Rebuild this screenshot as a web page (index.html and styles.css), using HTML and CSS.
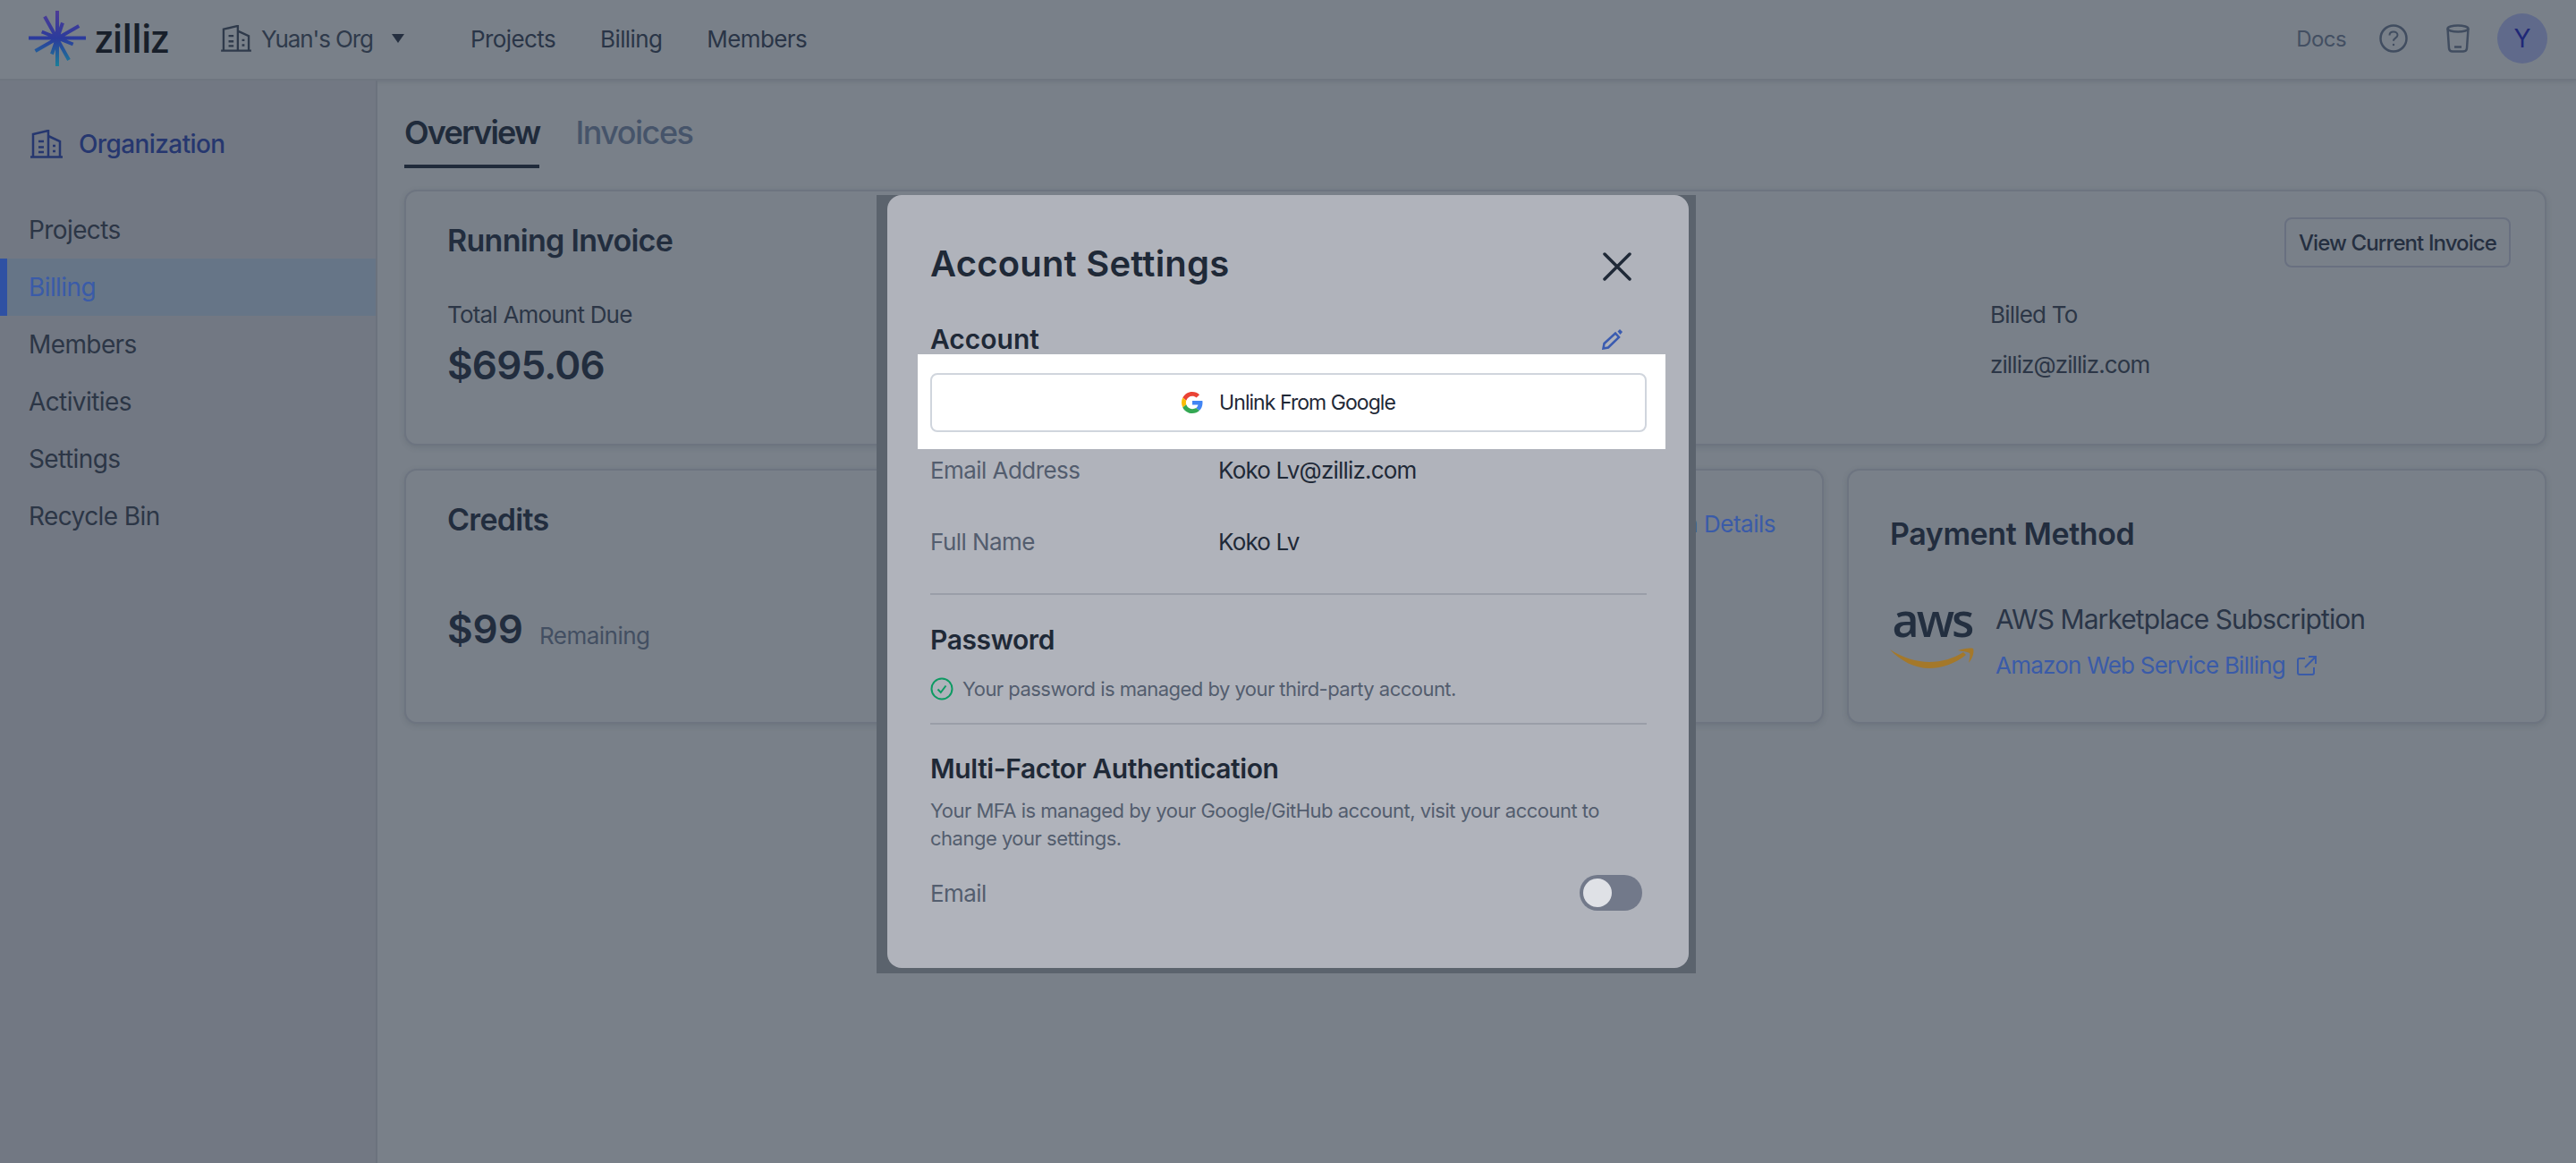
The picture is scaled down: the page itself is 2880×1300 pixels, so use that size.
FILE: index.html
```html
<!DOCTYPE html>
<html lang="en">
<head>
    <meta charset="UTF-8">
    <title>Zilliz - Billing</title>
    <link rel="stylesheet" href="styles.css">
</head>
<body>
    <header class="topbar">
        <div class="brand">
            <svg class="brand-mark" width="66" height="66" viewBox="31 11 66 66" fill="none">
                <defs>
                    <linearGradient id="star" gradientUnits="userSpaceOnUse" x1="64" y1="12" x2="64" y2="76">
                        <stop offset="0" stop-color="#4f3c96"/>
                        <stop offset="0.5" stop-color="#2b3b9c"/>
                        <stop offset="1" stop-color="#1a8098"/>
                    </linearGradient>
                </defs>
                <path stroke="url(#star)" stroke-width="4" d="M64 13V75M32 43.5H96M50 19.5 77 68M88.3 30 39.5 58M70 26.5 58 61.5M46.7 36.5 81.7 50.5"/>
            </svg>
            <span class="brand-name">zilliz</span>
        </div>
        <div class="org-switch">
            <svg width="34" height="30" viewBox="0 0 36 32" fill="none" stroke="#2f3a4b" stroke-width="2.5">
                <path d="M0 30.5H36M3 30V5L20 1V30M20 7L33 13V30M9 13H15M9 19.5H15M9 25H15M25 18H28M25 24H28"/>
            </svg>
            <span>Yuan's Org</span>
            <i class="caret"></i>
        </div>
        <nav class="topnav">
            <a href="#">Projects</a>
            <a href="#">Billing</a>
            <a href="#">Members</a>
        </nav>
        <div class="top-actions">
            <a href="#" class="docs">Docs</a>
            <svg class="help-icon" width="32" height="32" viewBox="0 0 32 32" fill="none" stroke="#414d60" stroke-width="2.5">
                <circle cx="16" cy="16" r="14.5"/>
                <path d="M11.5 12.5C11.5 9.8 13.5 8.5 16 8.5S20.5 10 20.5 12.3C20.5 15.3 16 15.5 16 18.8" stroke-width="2"/>
                <circle cx="16" cy="23" r="1.2" fill="#414d60" stroke="none"/>
            </svg>
            <svg class="bucket-icon" width="26" height="32" viewBox="0 0 26 32" fill="none" stroke="#414d60" stroke-width="2.5">
                <ellipse cx="13" cy="5" rx="11.5" ry="3.5"/>
                <path d="M1.5 5L3 27C3.2 29.5 5 30.5 7 30.5H19C21 30.5 22.8 29.5 23 27L24.5 5M9 25.5H17"/>
            </svg>
            <div class="avatar">Y</div>
        </div>
    </header>

    <div class="layout">
        <aside class="sidebar">
            <div class="side-title">
                <svg width="36" height="32" viewBox="0 0 36 32" fill="none" stroke="#26376f" stroke-width="2.5">
                    <path d="M0 30.5H36M3 30V5L20 1V30M20 7L33 13V30M9 13H15M9 19.5H15M9 25H15M25 18H28M25 24H28"/>
                </svg>
                <span>Organization</span>
            </div>
            <a href="#" class="side-link">Projects</a>
            <a href="#" class="side-link active">Billing</a>
            <a href="#" class="side-link">Members</a>
            <a href="#" class="side-link">Activities</a>
            <a href="#" class="side-link">Settings</a>
            <a href="#" class="side-link">Recycle Bin</a>
        </aside>

        <main class="content">
            <div class="tabs">
                <a href="#" class="tab active">Overview</a>
                <a href="#" class="tab">Invoices</a>
            </div>

            <section class="card invoice-card">
                <div class="card-head">
                    <h2>Running Invoice</h2>
                    <button class="outline-btn">View Current Invoice</button>
                </div>
                <div class="invoice-cols">
                    <div>
                        <p class="label">Total Amount Due</p>
                        <p class="amount">$695.06</p>
                    </div>
                    <div class="billed">
                        <p class="label">Billed To</p>
                        <p class="billed-mail">zilliz@zilliz.com</p>
                    </div>
                </div>
            </section>

            <div class="card-row">
                <section class="card credits-card">
                    <div class="credits-head">
                        <h2>Credits</h2>
                        <a href="#" class="link">Redemption Details</a>
                    </div>
                    <p class="credits-left"><span class="amount">$99</span><span class="label">Remaining</span></p>
                </section>
                <section class="card payment-card">
                    <h2>Payment Method</h2>
                    <div class="payment-body">
                        <div class="aws-logo">
                            <span>aws</span>
                            <svg width="94" height="24" viewBox="0 0 94 24">
                                <path fill="#a4782a" d="M0 2C14 11 30 16 44 16C58 16 71 12 82 5L85 8C74 17 58 23 44 23C28 23 12 15 0 2Z"/>
                                <path fill="#a4782a" d="M76 3C82 1 90 0 93 1C94.500 5 92 13 88 17C89 12 90 8 89 6C86 4.500 81 4 76 3Z"/>
                            </svg>
                        </div>
                        <div>
                            <p class="payment-name">AWS Marketplace Subscription</p>
                            <a href="#" class="link aws-link">Amazon Web Service Billing
                                <svg width="22" height="22" viewBox="0 0 22 22" fill="none" stroke="#3a5ba8" stroke-width="2">
                                    <path d="M9 3H3C2 3 1 4 1 5V19C1 20 2 21 3 21H17C18 21 19 20 19 19V13M13 1H21V9M21 1L9 13"/>
                                </svg>
                            </a>
                        </div>
                    </div>
                </section>
            </div>
        </main>
    </div>

    <div class="modal-frame">
        <div class="modal">
            <div class="modal-head">
                <h1>Account Settings</h1>
                <svg class="close" width="32" height="32" viewBox="0 0 32 32" fill="none" stroke="#1f2937" stroke-width="3.5" stroke-linecap="round">
                    <path d="M2 2L30 30M30 2L2 30"/>
                </svg>
            </div>
            <div class="section-head account-head">
                <h3>Account</h3>
                <svg class="pencil" width="24" height="24" viewBox="0 0 24 24" fill="none" stroke="#3a5bb0" stroke-width="2.5">
                    <path d="M1.5 22.5L2.5 17L15 5.5L19 10L7 21.5Z"/>
                    <path d="M17.5 3.5L20 1L23 4L20.5 7Z" fill="#3a5bb0" stroke="none"/>
                </svg>
            </div>
            <div class="spotlight">
                <button class="google-btn">
                    <svg width="24" height="24" viewBox="0 0 48 48">
                        <path fill="#EA4335" d="M24 9.5c3.54 0 6.71 1.22 9.21 3.6l6.85-6.85C35.9 2.38 30.47 0 24 0 14.62 0 6.51 5.38 2.56 13.22l7.98 6.19C12.43 13.72 17.74 9.5 24 9.5z"/>
                        <path fill="#4285F4" d="M46.98 24.55c0-1.57-.15-3.09-.38-4.55H24v9.02h12.94c-.58 2.96-2.26 5.48-4.78 7.18l7.73 6c4.51-4.18 7.09-10.36 7.09-17.65z"/>
                        <path fill="#FBBC05" d="M10.53 28.59c-.48-1.45-.76-2.99-.76-4.59s.27-3.14.76-4.59l-7.98-6.19C.92 16.46 0 20.12 0 24c0 3.88.92 7.54 2.56 10.78l7.97-6.19z"/>
                        <path fill="#34A853" d="M24 48c6.48 0 11.93-2.13 15.89-5.81l-7.73-6c-2.15 1.45-4.92 2.3-8.16 2.3-6.26 0-11.57-4.22-13.47-9.91l-7.98 6.19C6.51 42.62 14.62 48 24 48z"/>
                    </svg>
                    <span>Unlink From Google</span>
                </button>
            </div>
            <div class="field"><span class="field-name">Email Address</span><span>Koko Lv@zilliz.com</span></div>
            <div class="field field-second"><span class="field-name">Full Name</span><span>Koko Lv</span></div>
            <hr class="divider">
            <h3 class="password-title">Password</h3>
            <p class="note">
                <svg width="26" height="26" viewBox="0 0 26 26" fill="none" stroke="#0e9a63" stroke-width="2">
                    <circle cx="13" cy="13" r="11.5"/>
                    <path d="M8.5 13.5L11.8 17L17.5 9.5"/>
                </svg>
                Your password is managed by your third-party account.
            </p>
            <hr class="divider divider-tight">
            <h3 class="mfa-title">Multi-Factor Authentication</h3>
            <p class="mfa-text">Your MFA is managed by your Google/GitHub account, visit your account to change your settings.</p>
            <div class="mfa-row">
                <span class="field-name">Email</span>
                <span class="toggle"><i></i></span>
            </div>
        </div>
    </div>
</body>
</html>
```

FILE: styles.css
```css
* {
    box-sizing: border-box;
}
html, body {
    height: 100%;
}
body {
    margin: 0;
    position: relative;
    display: flex;
    flex-direction: column;
    font-family: Inter, "Noto Sans", sans-serif;
    background-color: #798089;
    color: #252f40;
    overflow: hidden;
}
h1, h2, h3, p {
    margin: 0;
}
a {
    color: inherit;
    text-decoration: none;
}

/* top bar */
.topbar {
    height: 90px;
    flex: none;
    display: flex;
    align-items: center;
    padding-bottom: 2px;
    border-bottom: 2px solid #6f7680;
    box-shadow: 0 2px 4px rgba(60, 68, 80, 0.15);
}
.brand {
    display: flex;
    align-items: center;
    margin-left: 31px;
    width: 216px;
}
.brand-mark {
    flex: none;
}
.brand-name {
    margin-left: 9px;
    font-family: "Open Sans", sans-serif;
    font-size: 43px;
    line-height: 60px;
    font-weight: 600;
    letter-spacing: -1.2px;
    color: #181f2a;
}
.org-switch {
    display: flex;
    align-items: center;
    width: 279px;
    font-size: 26px;
    letter-spacing: -1.1px;
    color: #2f3a4b;
}
.org-switch span {
    margin-left: 11px;
}
.caret {
    margin-left: 21px;
    border-left: 7px solid transparent;
    border-right: 7px solid transparent;
    border-top: 10px solid #252f40;
}
.topnav {
    display: flex;
    gap: 50px;
    font-size: 26px;
    letter-spacing: -0.6px;
    color: #2a3547;
}
.top-actions {
    margin-left: auto;
    margin-right: 32px;
    display: flex;
    align-items: center;
}
.docs {
    font-size: 24px;
    letter-spacing: -0.6px;
    color: #434f62;
}
.help-icon {
    margin-left: 37px;
}
.bucket-icon {
    margin-left: 43px;
}
.avatar {
    width: 56px;
    height: 56px;
    margin-left: 31px;
    border-radius: 50%;
    display: flex;
    align-items: center;
    justify-content: center;
    background-color: #606a8b;
    color: #1f2877;
    font-size: 28px;
}

/* sidebar */
.layout {
    flex: 1;
    display: flex;
}
.sidebar {
    width: 422px;
    flex: none;
    background-color: #727883;
    border-right: 2px solid #6b727d;
    font-size: 28px;
    letter-spacing: -0.6px;
    color: #2c3646;
}
.side-title {
    display: flex;
    align-items: center;
    gap: 18px;
    margin: 51px 0 44px 34px;
    height: 40px;
    color: #26376f;
    font-weight: 500;
}
.side-link {
    display: block;
    height: 64px;
    line-height: 64px;
    padding-left: 32px;
}
.side-link.active {
    padding-left: 24px;
    border-left: 8px solid #2f51a3;
    background-color: #667587;
    color: #3a5ba8;
}

/* content */
.content {
    flex: 1;
    padding: 0 33px 0 30px;
}
.tabs {
    display: flex;
    gap: 40px;
    height: 98px;
    padding-top: 36px;
}
.tab {
    height: 62px;
    line-height: 44px;
    font-size: 36px;
    font-weight: 500;
    letter-spacing: -1.5px;
    color: #46546a;
}
.tab.active {
    font-weight: 600;
    letter-spacing: -1.8px;
    color: #202b3b;
    border-bottom: 4px solid #202b3b;
}
.card {
    border: 2px solid #6d7480;
    border-radius: 14px;
    box-shadow: 0 2px 6px rgba(60, 68, 80, 0.2);
    background-color: #798089;
}
.card h2 {
    font-size: 34px;
    line-height: 40px;
    font-weight: 600;
    letter-spacing: -0.7px;
    color: #222d3e;
}
.invoice-card {
    margin-top: 24px;
    height: 286px;
    padding: 29px 38px 0 46px;
}
.card-head {
    display: flex;
    align-items: center;
    justify-content: space-between;
    height: 56px;
}
.card-head h2 {
    margin-top: -4px;
}
.outline-btn {
    width: 253px;
    height: 56px;
    padding: 0;
    border: 2px solid #697080;
    border-radius: 8px;
    background: none;
    font-family: inherit;
    font-size: 24px;
    font-weight: 500;
    letter-spacing: -0.9px;
    color: #252f40;
}
.invoice-cols {
    display: flex;
    justify-content: space-between;
    margin-top: 37px;
}
.billed {
    width: 582px;
}
.label {
    font-size: 26px;
    line-height: 32px;
    letter-spacing: -0.8px;
    color: #2c3646;
}
.amount {
    font-size: 44px;
    line-height: 56px;
    font-weight: 600;
    letter-spacing: -0.8px;
    color: #222d3e;
}
.invoice-cols .amount, .billed-mail {
    margin-top: 12px;
}
.billed-mail {
    font-size: 26px;
    line-height: 56px;
    letter-spacing: -0.9px;
    color: #2c3646;
}
.card-row {
    display: flex;
    gap: 26px;
    margin-top: 26px;
}
.credits-card {
    flex: none;
    width: 1587px;
    height: 285px;
    padding: 34px 52px 0 46px;
}
.credits-head {
    display: flex;
    justify-content: space-between;
    align-items: center;
}
.link {
    font-size: 26px;
    letter-spacing: -0.77px;
    color: #3a5ba8;
}
.credits-head .link {
    margin-top: 10px;
    letter-spacing: -0.5px;
}
.credits-left {
    display: flex;
    align-items: flex-end;
    gap: 18px;
    margin-top: 74px;
}
.credits-left .label {
    margin-bottom: 4px;
    letter-spacing: -0.5px;
    color: #434f62;
}
.credits-left .amount {
    letter-spacing: 0;
}
.payment-card {
    flex: 1;
    height: 285px;
    padding: 51px 30px 0 46px;
}
.payment-card h2 {
    letter-spacing: -0.4px;
}
.payment-body {
    display: flex;
    gap: 24px;
    margin-top: 55px;
}
.aws-logo {
    width: 94px;
    display: flex;
    flex-direction: column;
}
.aws-logo span {
    height: 52px;
    font-family: "Open Sans", sans-serif;
    font-size: 52px;
    line-height: 40px;
    font-weight: 600;
    letter-spacing: -3px;
    color: #232f40;
    text-align: center;
}
.payment-name {
    font-size: 30px;
    line-height: 40px;
    letter-spacing: -0.93px;
    color: #2a3547;
}
.aws-link {
    display: flex;
    align-items: center;
    gap: 13px;
    margin-top: 16px;
    line-height: 32px;
}

/* dialog */
.modal-frame {
    position: absolute;
    left: 980px;
    top: 218px;
    width: 916px;
    height: 870px;
    padding: 0 8px 6px 12px;
    background-color: #5b636d;
}
.modal {
    height: 100%;
    padding: 53px 47px 0 48px;
    border-radius: 16px;
    background-color: #b0b3bb;
    color: #1f2937;
}
.modal-head {
    display: flex;
    justify-content: space-between;
    align-items: center;
    height: 48px;
}
.modal-head h1 {
    font-size: 40px;
    line-height: 48px;
    font-weight: 600;
    letter-spacing: 0.2px;
}
.close {
    margin-right: 17px;
    margin-top: 6px;
}
.modal h3 {
    font-size: 30px;
    line-height: 36px;
    font-weight: 600;
    letter-spacing: -0.4px;
}
.section-head {
    display: flex;
    justify-content: space-between;
    align-items: center;
}
.account-head {
    margin-top: 42px;
    height: 35px;
}
.account-head h3 {
    letter-spacing: 0;
}
.pencil {
    margin-right: 26px;
}
.spotlight {
    margin: 0 -21px 8px -14px;
    padding: 21px 21px 19px 14px;
    background-color: #fff;
}
.google-btn {
    width: 100%;
    height: 66px;
    display: flex;
    align-items: center;
    justify-content: center;
    gap: 18px;
    border: 2px solid #d0d5dd;
    border-radius: 8px;
    background-color: #fff;
    font-family: inherit;
    font-size: 23px;
    letter-spacing: -0.95px;
    color: #1f2937;
}
.field {
    display: flex;
    font-size: 26px;
    line-height: 32px;
    letter-spacing: -0.8px;
}
.field-second {
    margin-top: 48px;
}
.field-name {
    width: 322px;
    letter-spacing: -0.56px;
    color: #535d6e;
}
.divider {
    height: 2px;
    margin: 41px 0 0;
    border: none;
    background-color: #9a9ea8;
}
.password-title {
    margin-top: 32px;
}
.note {
    display: flex;
    align-items: center;
    gap: 10px;
    margin-top: 21px;
    font-size: 22px;
    line-height: 32px;
    letter-spacing: -0.53px;
    color: #535d6e;
}
.divider-tight {
    margin-top: 22px;
}
.mfa-title {
    margin-top: 31px;
}
.mfa-text {
    margin-top: 14px;
    font-size: 22px;
    line-height: 31px;
    letter-spacing: -0.5px;
    color: #535d6e;
}
.mfa-row {
    display: flex;
    justify-content: space-between;
    align-items: center;
    margin-top: 25px;
    padding-right: 5px;
    font-size: 26px;
}
.toggle {
    width: 70px;
    height: 40px;
    padding: 4px;
    border-radius: 20px;
    background-color: #72798a;
}
.toggle i {
    display: block;
    width: 32px;
    height: 32px;
    border-radius: 50%;
    background-color: #dfe1e6;
}
```
